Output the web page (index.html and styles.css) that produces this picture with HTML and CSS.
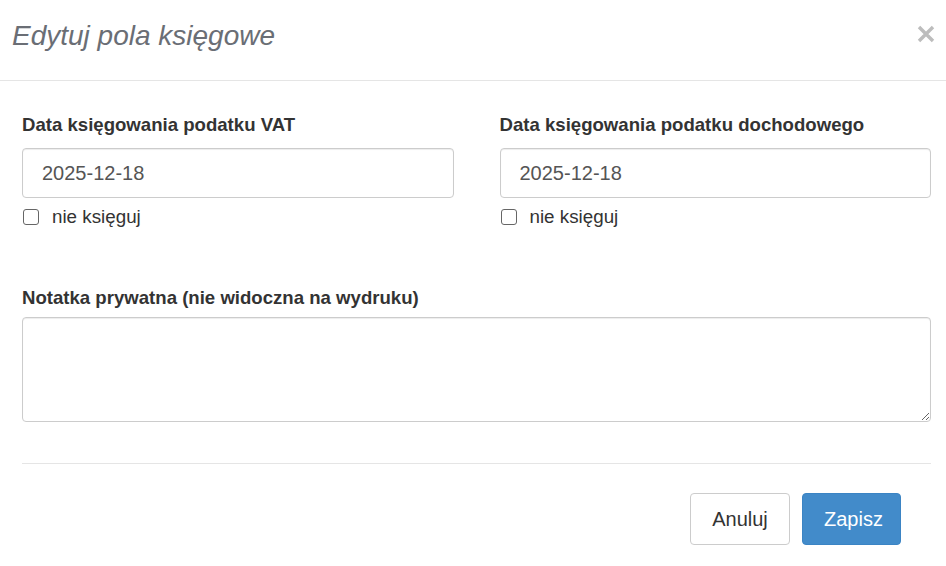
FILE: index.html
```html
<!DOCTYPE html>
<html lang="pl">
<head>
<meta charset="utf-8">
<title>Edytuj pola księgowe</title>
<link rel="stylesheet" href="styles.css">
</head>
<body>
<div class="modal">
  <div class="modal-header">
    <h4 class="modal-title">Edytuj pola księgowe</h4>
    <button class="close" type="button" aria-label="Zamknij">
      <svg width="18" height="18" viewBox="0 0 18 18"><path d="M2 2 L16 16 M16 2 L2 16" stroke="#bdbdbd" stroke-width="3.4" stroke-linecap="butt" fill="none"/></svg>
    </button>
  </div>
  <div class="modal-body">
    <div class="row">
      <div class="col">
        <label class="field-label">Data księgowania podatku VAT</label>
        <input class="form-control" type="text" value="2025-12-18">
        <label class="check"><input type="checkbox" class="checkbox"> <span>nie księguj</span></label>
      </div>
      <div class="col">
        <label class="field-label">Data księgowania podatku dochodowego</label>
        <input class="form-control" type="text" value="2025-12-18">
        <label class="check"><input type="checkbox" class="checkbox"> <span>nie księguj</span></label>
      </div>
    </div>
    <div class="note">
      <label class="field-label note-label">Notatka prywatna (nie widoczna na wydruku)</label>
      <textarea class="form-control note-area"></textarea>
    </div>
  </div>
  <div class="modal-footer">
    <button class="btn btn-default" type="button">Anuluj</button>
    <button class="btn btn-primary" type="button">Zapisz</button>
  </div>
</div>
</body>
</html>
```

FILE: styles.css
```css
* { box-sizing: border-box; }

html, body {
  margin: 0;
  padding: 0;
  background: #fff;
}

body {
  font-family: "Liberation Sans", Arial, sans-serif;
  color: #333;
  width: 946px;
  height: 566px;
  overflow: hidden;
}

.modal-header {
  height: 81px;
  padding: 20px 11px 0 12px;
  border-bottom: 1px solid #e5e5e5;
  display: flex;
  justify-content: space-between;
  align-items: flex-start;
}

.modal-title {
  margin: 0;
  font-size: 28px;
  line-height: 32px;
  font-style: italic;
  font-weight: normal;
  color: #6a6e75;
}

.close {
  border: 0;
  background: transparent;
  padding: 0;
  margin-top: 5px;
  width: 18px;
  height: 18px;
  display: block;
  cursor: pointer;
}

.close svg { display: block; }

.modal-body {
  padding: 33px 15px 41px 22px;
}

.row {
  display: flex;
  gap: 46px;
}

.col {
  flex: 1;
  display: flex;
  flex-direction: column;
  align-items: flex-start;
}

.field-label {
  display: block;
  font-size: 18.6px;
  line-height: 22px;
  font-weight: bold;
  color: #333;
  margin-bottom: 12px;
}

.form-control {
  width: 100%;
  height: 50px;
  border: 1px solid #ccc;
  border-radius: 4px;
  box-shadow: inset 0 1px 1px rgba(0,0,0,.075);
  padding: 0 12px 0 19px;
  font-family: "Liberation Sans", Arial, sans-serif;
  font-size: 20px;
  color: #555;
  background: #fff;
  outline: none;
  margin: 0;
}

.check {
  margin-top: 8px;
  display: flex;
  align-items: center;
  height: 22px;
  font-size: 18.8px;
  line-height: 22px;
  color: #333;
}

.check span { margin-left: 13px; }

.checkbox {
  -webkit-appearance: none;
  appearance: none;
  flex: none;
  margin: 0 0 0 1px;
  width: 16px;
  height: 16px;
  border: 1.5px solid #666;
  border-radius: 3px;
  background: #fff;
}

.note {
  margin-top: 59px;
}

.note-label {
  margin-bottom: 8px;
}

.note-area {
  display: block;
  height: 105px;
  padding: 8px 19px;
  resize: vertical;
}

.modal-footer {
  margin: 0 15px 0 22px;
  border-top: 1px solid #e5e5e5;
  padding: 29px 30px 0 0;
  display: flex;
  justify-content: flex-end;
  gap: 12px;
}

.btn {
  height: 52px;
  border-radius: 4px;
  font-family: "Liberation Sans", Arial, sans-serif;
  font-size: 20px;
  padding: 0 21px;
  cursor: pointer;
}

.btn-default {
  width: 100px;
  background: #fff;
  border: 1px solid #ccc;
  color: #333;
}

.btn-primary {
  width: 99px;
  background: #428bca;
  border: 1px solid #3b84c4;
  color: #fff;
}
```
